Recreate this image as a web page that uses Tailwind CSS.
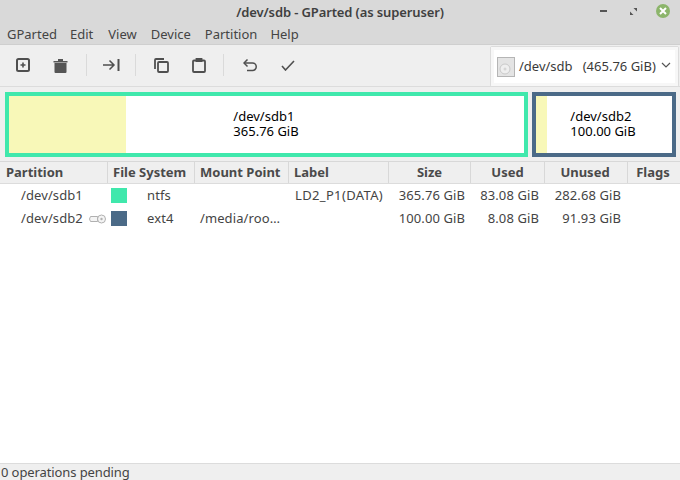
<!DOCTYPE html>
<html lang="en">
<head>
    <meta charset="UTF-8">
    <title>/dev/sdb - GParted (as superuser)</title>
    <script src="https://cdn.jsdelivr.net/npm/@tailwindcss/browser@4"></script>
</head>
<body class="w-[680px] h-[480px] overflow-hidden flex flex-col bg-[#efefef] text-[#3c3c3c] font-['Noto_Sans',sans-serif] text-[13px]">
    <!-- title bar + menu -->
    <header class="h-[45px] bg-[#d9d9d9] border-b border-[#cfcfcf] flex flex-col shrink-0">
        <div class="h-[25px] relative flex items-center justify-center font-semibold text-[13px] tracking-[-0.12px] text-[#404040] pt-[1px]">
            <span>/dev/sdb - GParted (as superuser)</span>
            <div class="absolute right-[10px] top-[4px] flex items-center">
                <div class="w-[7px] h-[2px] bg-[#555555] mr-[23px]"></div>
                <svg width="7" height="7" viewBox="0 0 8 8" class="fill-[#555555] mr-[19px]"><path d="M4 0h4v4zM0 4l4 4H0z"/></svg>
                <div class="w-[14px] h-[14px] rounded-full bg-[#8cb56b] flex items-center justify-center">
                    <svg width="8" height="8" viewBox="0 0 8 8" class="stroke-white stroke-2"><path d="M1 1l6 6M7 1l-6 6"/></svg>
                </div>
            </div>
        </div>
        <nav class="flex gap-[14px] px-[7px] h-[19px] items-center text-[13px] text-[#444444]">
            <span>GParted</span><span class="-ml-px">Edit</span><span class="ml-px">View</span><span>Device</span><span>Partition</span><span class="-ml-px">Help</span>
        </nav>
    </header>

    <!-- toolbar -->
    <div class="h-[42px] shrink-0 flex items-center border-b border-[#dcdcdc] relative">
        <div class="flex items-center pl-[16px] h-full pb-[1px] text-[#555555]">
            <svg width="14" height="14" viewBox="0 0 14 14" fill="none" stroke="#4f4f4f" stroke-width="2" class="mr-[23px]"><rect x="1" y="1" width="12" height="12" rx="1.5"/><path d="M7 4.500v5M4.500 7h5" stroke-width="1.600"/></svg>
            <svg width="15" height="15" viewBox="0 0 15 15" fill="#555555" class="mr-[18px]"><path d="M0.500 3h14v1.500H0.500zM5 1h5v2H5zM1.500 5h12v9a1 1 0 0 1-1 1h-10a1 1 0 0 1-1-1z"/></svg>
            <div class="w-px h-[22px] bg-[#dadada] mr-[16px]"></div>
            <svg width="17" height="12" viewBox="0 0 17 12" fill="none" stroke="#4f4f4f" stroke-width="1.500" class="mr-[15px]"><path d="M0 6h11M6.500 1.500L11 6l-4.500 4.500"/><path d="M15.500 0v12" stroke-width="2"/></svg>
            <div class="w-px h-[22px] bg-[#dadada] mr-[18px]"></div>
            <svg width="15" height="15" viewBox="0 0 15 15" fill="none" stroke="#4f4f4f" stroke-width="1.800" class="mr-[23px]"><path d="M1 11V2a1 1 0 0 1 1-1h8"/><rect x="4" y="4" width="10" height="10" rx="1"/></svg>
            <svg width="14" height="15" viewBox="0 0 14 15" fill="none" stroke="#4f4f4f" stroke-width="1.800" class="mr-[17px]"><path d="M4 2.500H2a1 1 0 0 0-1 1V13a1 1 0 0 0 1 1h10a1 1 0 0 0 1-1V3.500a1 1 0 0 0-1-1h-2"/><path d="M4.500 3h5V1h-5z"/></svg>
            <div class="w-px h-[22px] bg-[#dadada] mr-[19px]"></div>
            <svg width="14" height="13" viewBox="0 0 14 13" fill="none" stroke="#4f4f4f" stroke-width="1.500" class="mr-[24px]"><path d="M4.500 0.500L1 4l3.500 3.500"/><path d="M1 4h8.500a3.700 3.700 0 0 1 0 7.500H4"/></svg>
            <svg width="14" height="11" viewBox="0 0 14 11" fill="none" stroke="#4f4f4f" stroke-width="1.600"><path d="M1 6l3.500 4L13 1"/></svg>
        </div>
        <!-- device picker -->
        <div class="absolute right-[1px] top-[1px] w-[189px] h-[41px] bg-white border border-[#dcdcdc] rounded-[2px] flex items-center pl-[6px] pr-[6px] outline outline-[3px] -outline-offset-[4px] outline-[#f7f7f7]">
            <svg width="18" height="20" viewBox="0 0 18 20" class="shrink-0 mr-[4px]"><rect x="0.500" y="0.500" width="17" height="19" fill="#e4e4e4" stroke="#b5b5b5"/><circle cx="8" cy="12" r="5" fill="#efefef" stroke="#c9c9c9"/><circle cx="8" cy="12" r="1.500" fill="#d5d5d5"/></svg>
            <span class="text-[13px] text-[#3a3a3a] whitespace-pre">/dev/sdb   (465.76 GiB)</span>
            <svg width="10" height="6" viewBox="0 0 10 6" fill="none" stroke="#555555" stroke-width="1.200" class="ml-auto mb-[3px] mr-px"><path d="M1 1l4 4 4-4"/></svg>
        </div>
    </div>

    <!-- partition map -->
    <div class="h-[74px] shrink-0 flex items-start pt-[5px] pl-[5px] gap-[4px]">
        <div class="w-[523px] h-[65px] border-[4px] border-[#40e8ac] bg-white relative flex items-center justify-center text-black leading-[15px] text-[13px] pb-[2px]">
            <div class="absolute left-0 top-0 bottom-0 w-[117px] bg-[#f8f8b8]"></div>
            <div class="relative pr-[1px]">/dev/sdb1<br>365.76 GiB</div>
        </div>
        <div class="w-[144px] h-[65px] border-[4px] border-[#4b6a87] bg-white relative flex items-center justify-center text-black leading-[15px] text-[13px] pb-[2px]">
            <div class="absolute left-0 top-0 bottom-0 w-[11px] bg-[#f8f8b8]"></div>
            <div class="relative pr-[2px]">/dev/sdb2<br>100.00 GiB</div>
        </div>
    </div>

    <!-- partition table -->
    <div class="flex-1 min-h-0 bg-white border-l border-[#d8d8d8] border-t -ml-px">
        <div class="grid grid-cols-[108px_87px_94px_100px_82px_74px_83px_53px] h-[22px] bg-[#efefef] border-b border-[#dcdcdc] font-bold text-[13px] text-[#4a4a4a] items-center">
            <div class="h-full flex items-center pl-[6px] border-r border-[#d8d8d8]">Partition</div>
            <div class="h-full flex items-center pl-[5px] border-r border-[#d8d8d8]">File System</div>
            <div class="h-full flex items-center pl-[5px] border-r border-[#d8d8d8]">Mount Point</div>
            <div class="h-full flex items-center pl-[5px] border-r border-[#d8d8d8]">Label</div>
            <div class="h-full flex items-center justify-center border-r border-[#d8d8d8]">Size</div>
            <div class="h-full flex items-center justify-center border-r border-[#d8d8d8]">Used</div>
            <div class="h-full flex items-center justify-center border-r border-[#d8d8d8] pr-[2px]">Unused</div>
            <div class="h-full flex items-center justify-center pr-[3px]">Flags</div>
        </div>
        <div class="grid grid-cols-[108px_87px_94px_100px_82px_74px_83px_53px] h-[23px] items-center text-[#444444] tracking-[0.1px]">
            <div class="pl-[21px]">/dev/sdb1</div>
            <div class="flex items-center pl-[3px]"><div class="w-[16px] h-[15px] bg-[#40e8ac] mr-[20px]"></div>ntfs</div>
            <div></div>
            <div class="pl-[6px] whitespace-nowrap tracking-[0.35px]">LD2_P1(DATA)</div>
            <div class="text-right pr-[6px]">365.76 GiB</div>
            <div class="text-right pr-[6px]">83.08 GiB</div>
            <div class="text-right pr-[7px]">282.68 GiB</div>
            <div></div>
        </div>
        <div class="grid grid-cols-[108px_87px_94px_100px_82px_74px_83px_53px] h-[23px] items-center text-[#444444] tracking-[0.1px]">
            <div class="pl-[21px] flex items-center">/dev/sdb2
                <svg width="17" height="10" viewBox="0 0 17 10" fill="#f4f4f4" stroke="#b0b0b0" class="ml-[6px]"><path d="M8.500 2.500H1.500L0.500 5 1.500 7.500H8.500z"/><circle cx="12.500" cy="5" r="4"/><circle cx="12.500" cy="5" r="1.200" fill="#b0b0b0" stroke="none"/></svg>
            </div>
            <div class="flex items-center pl-[3px]"><div class="w-[16px] h-[15px] bg-[#4b6a87] mr-[20px]"></div>ext4</div>
            <div class="pl-[5px] whitespace-nowrap">/media/roo…</div>
            <div></div>
            <div class="text-right pr-[6px]">100.00 GiB</div>
            <div class="text-right pr-[6px]">8.08 GiB</div>
            <div class="text-right pr-[7px]">91.93 GiB</div>
            <div></div>
        </div>
    </div>

    <!-- status bar -->
    <div class="h-[17px] shrink-0 border-t border-[#dcdcdc] flex items-center pl-px pt-[2px] text-[13px] tracking-[-0.1px] text-[#444444]">0 operations pending</div>
</body>
</html>
